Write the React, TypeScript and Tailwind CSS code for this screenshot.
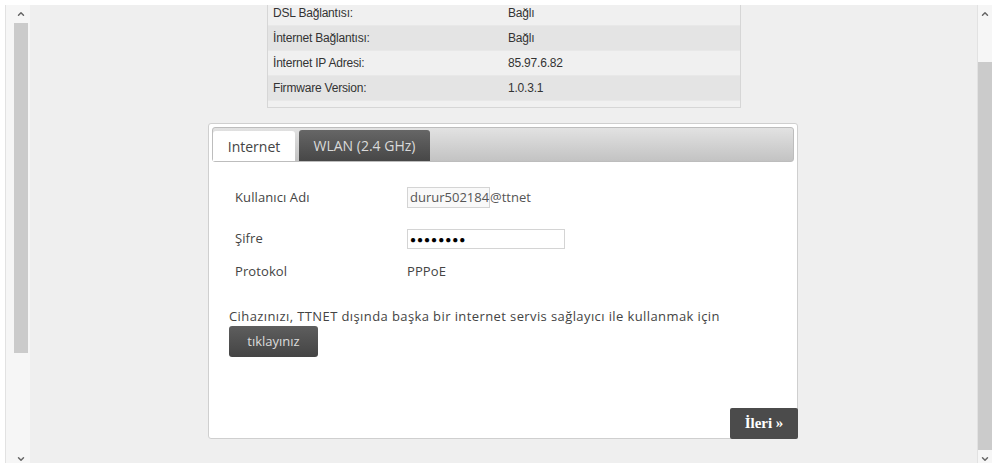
import { ChevronDown, ChevronUp } from "lucide-react";

const statusRows = [
  { label: "DSL Bağlantısı:", value: "Bağlı" },
  { label: "İnternet Bağlantısı:", value: "Bağlı" },
  { label: "İnternet IP Adresi:", value: "85.97.6.82" },
  { label: "Firmware Version:", value: "1.0.3.1" },
];

function ScrollTrack({
  thumbTop,
  thumbHeight,
  side,
}: {
  thumbTop: number;
  thumbHeight: number;
  side: "left" | "right";
}) {
  return (
    <div
      className={
        side === "left"
          ? "flex h-full w-[30px] shrink-0 bg-white pl-[5px]"
          : "flex h-full w-[15px] shrink-0 bg-white"
      }
    >
      <div
        className={
          side === "left"
            ? "flex h-full flex-1 border-l border-[#e2e2e2] bg-[#f6f6f6] pl-[8px]"
            : "flex h-full flex-1 border-l border-[#e2e2e2] bg-[#f6f6f6]"
        }
      >
        <div className="relative h-full w-[14px]">
          <ChevronUp
            className="absolute left-[2px] top-[4px] text-[#666]"
            size={10}
            strokeWidth={3.5}
          />
          <div
            className="absolute left-0 w-[14px] bg-[#cbcbcb]"
            style={{ top: thumbTop, height: thumbHeight }}
          />
          <ChevronDown
            className="absolute bottom-[-1px] left-[2px] text-[#666]"
            size={10}
            strokeWidth={3.5}
          />
        </div>
      </div>
    </div>
  );
}

function StatusTable() {
  return (
    <div className="-mt-[4px] ml-[237px] w-[474px] border border-t-0 border-[#d6d6d6] bg-[#f0f0f0] pb-[6px] font-['Liberation_Sans',Arial,sans-serif] text-[12px] tracking-[-0.2px] text-[#333]">
      {statusRows.map((row, i) => (
        <div
          key={row.label}
          className={
            i % 2 === 1
              ? "flex h-[25px] items-center border-b border-[#e8e8e8] bg-[#e4e4e4]"
              : "flex h-[25px] items-center border-b border-[#e8e8e8] bg-[#f0f0f0]"
          }
        >
          <span className="w-[240px] pl-[5px]">{row.label}</span>
          <span>{row.value}</span>
        </div>
      ))}
    </div>
  );
}

function InternetPanel() {
  return (
    <div className="ml-[178px] mt-[15px] flex h-[316px] w-[590px] flex-col rounded-[3px] border border-[#cfcfcf] bg-white p-[3px] font-['Open_Sans',sans-serif] text-[13px] tracking-[0.1px] text-[#444]">
      <div className="flex h-[35px] items-end rounded-[3px] border border-[#bdbdbd] bg-gradient-to-b from-[#e2e2e2] to-[#c3c3c3]">
        <div className="flex h-[30px] w-[82px] items-center justify-center rounded-t-[3px] bg-white text-[14px] tracking-normal text-[#444]">
          Internet
        </div>
        <div className="ml-[4px] flex h-[31px] w-[131px] items-center justify-center rounded-t-[3px] bg-gradient-to-b from-[#666] to-[#474747] text-[14px] tracking-normal text-[#dadada]">
          WLAN (2.4 GHz)
        </div>
      </div>

      <div className="flex-1 pl-[17px]">
        <div className="mt-[25px] flex h-[21px] items-center pl-[6px]">
          <span className="w-[172px]">Kullanıcı Adı</span>
          <span className="flex h-[21px] w-[83px] items-center border border-[#d4d4d4] bg-[#f9f9f9] pl-[2px] tracking-normal text-[#555]">
            durur502184
          </span>
          <span className="tracking-normal text-[#555]">@ttnet</span>
        </div>

        <div className="mt-[21px] flex h-[20px] items-center pl-[6px]">
          <span className="w-[172px]">Şifre</span>
          <span className="flex h-[20px] w-[158px] items-center border border-[#d4d4d4] bg-white pl-[2px] text-[10px] font-bold tracking-[1px] text-black">
            ●●●●●●●●
          </span>
        </div>

        <div className="mt-[13px] flex h-[20px] items-center pl-[6px]">
          <span className="w-[172px]">Protokol</span>
          <span>PPPoE</span>
        </div>

        <p className="mt-[25px] h-[18px] leading-[18px] tracking-[0.4px]">
          Cihazınızı, TTNET dışında başka bir internet servis sağlayıcı ile kullanmak için
        </p>
        <button className="mt-[1px] h-[31px] w-[89px] rounded-[3px] bg-gradient-to-b from-[#5e5e5e] to-[#444] text-[13px] tracking-normal text-[#dcdcdc]">
          tıklayınız
        </button>
      </div>

      <div className="-mb-[4px] -mr-[4px] flex justify-end">
        <button className="h-[31px] w-[68px] rounded-[2px] bg-[#4b4b4b] font-['Liberation_Serif',Georgia,serif] text-[15px] font-bold tracking-normal text-white">
          İleri »
        </button>
      </div>
    </div>
  );
}

export default function App() {
  return (
    <div className="flex h-[463px] w-[992px] flex-col overflow-hidden bg-[#efefef]">
      <div className="h-[5px] shrink-0 bg-white" />
      <div className="flex min-h-0 flex-1">
        <ScrollTrack side="left" thumbTop={18} thumbHeight={330} />
        <main className="min-w-0 flex-1 overflow-hidden">
          <StatusTable />
          <InternetPanel />
        </main>
        <ScrollTrack side="right" thumbTop={57} thumbHeight={388} />
      </div>
    </div>
  );
}
